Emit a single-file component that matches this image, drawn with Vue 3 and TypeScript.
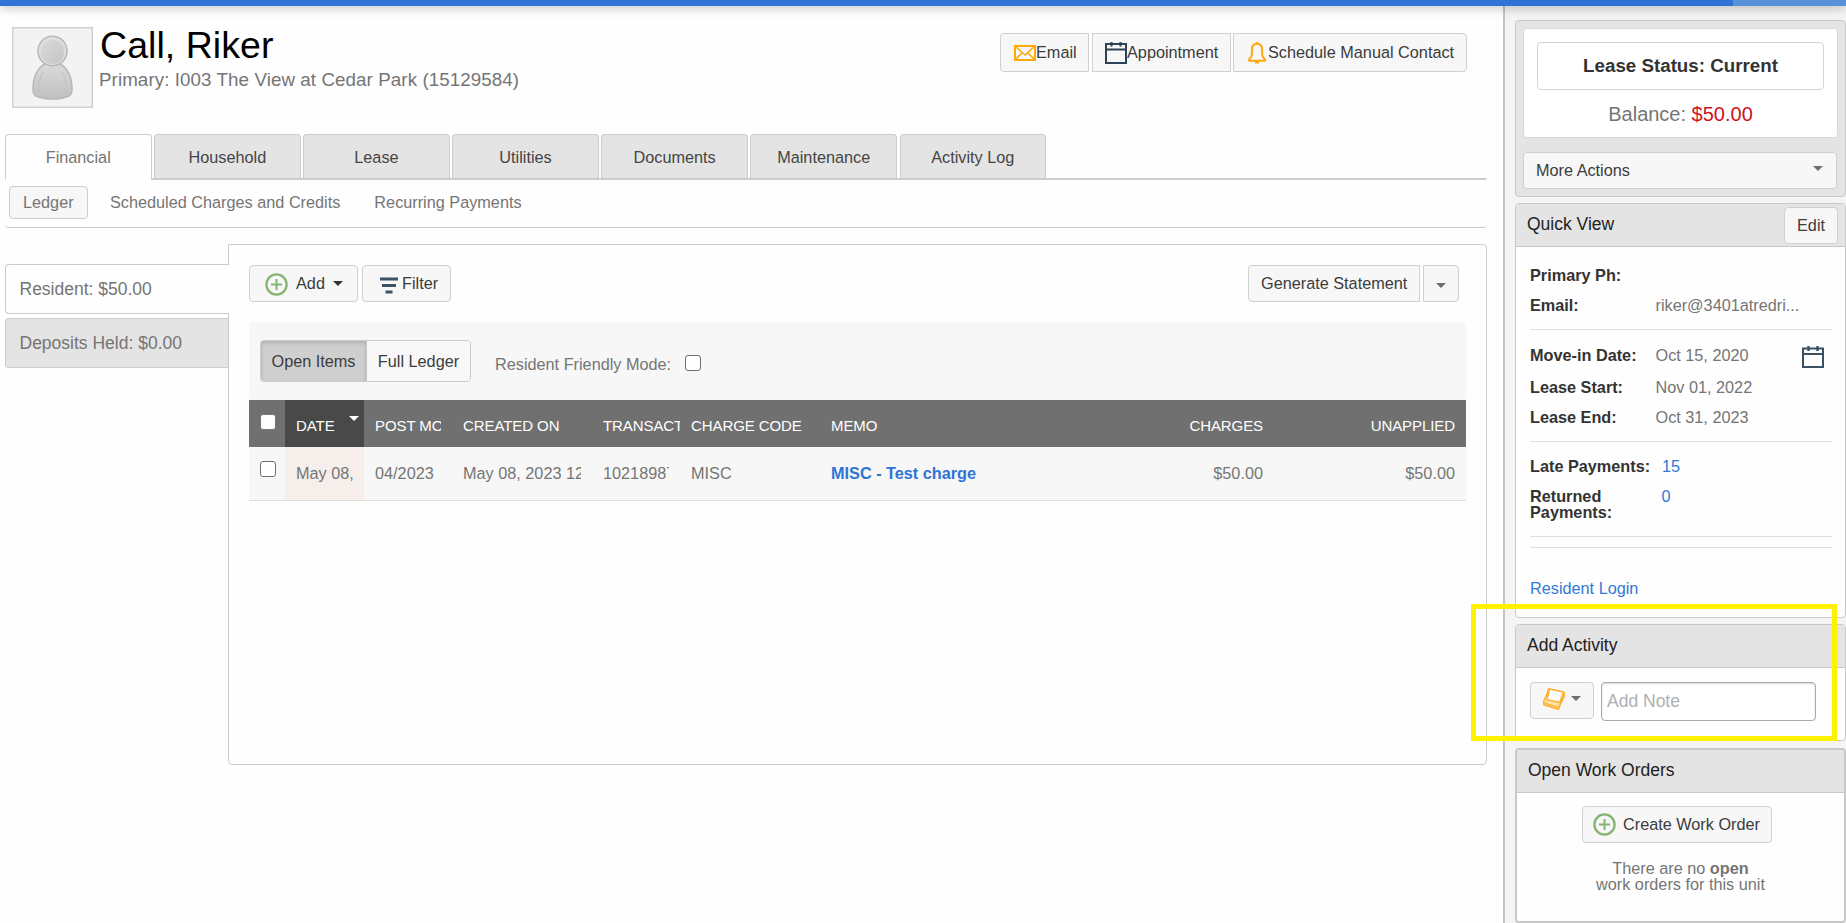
<script setup lang="ts">
import { ref } from 'vue'

interface Column {
  key: string
  label: string
  value: string
}

const tabs: string[] = ['Financial', 'Household', 'Lease', 'Utilities', 'Documents', 'Maintenance', 'Activity Log']
const subTabs: string[] = ['Ledger', 'Scheduled Charges and Credits', 'Recurring Payments']
const accounts: string[] = ['Resident: $50.00', 'Deposits Held: $0.00']
const modes: string[] = ['Open Items', 'Full Ledger']

const activeTab = ref('Financial')
const activeSubTab = ref('Ledger')
const activeAccount = ref(accounts[0])
const activeMode = ref('Open Items')
const residentFriendly = ref(false)
const allSelected = ref(false)
const rowSelected = ref(false)
const note = ref('')

const columns: Column[] = [
  { key: 'date', label: 'DATE', value: 'May 08,' },
  { key: 'post', label: 'POST MO', value: '04/2023' },
  { key: 'created', label: 'CREATED ON', value: 'May 08, 2023 12' },
  { key: 'trans', label: 'TRANSACT', value: '10218987' },
  { key: 'code', label: 'CHARGE CODE', value: 'MISC' },
  { key: 'memo', label: 'MEMO', value: 'MISC - Test charge' },
  { key: 'charges', label: 'CHARGES', value: '$50.00' },
  { key: 'unapplied', label: 'UNAPPLIED', value: '$50.00' },
]
</script>

<template>
  <div class="page">
    <div class="topbar"><div class="topbar-end"></div></div>
    <div class="layout">
      <main class="main">
        <header class="profile">
          <svg class="avatar" viewBox="0 0 81 81">
            <defs>
              <linearGradient id="skin" x1="0" y1="0" x2="1" y2="1">
                <stop offset="0" stop-color="#dadada" />
                <stop offset="1" stop-color="#c4c4c5" />
              </linearGradient>
              <linearGradient id="torso" x1="0" y1="0" x2="0" y2="1">
                <stop offset="0" stop-color="#dadada" />
                <stop offset="1" stop-color="#bfc0c1" />
              </linearGradient>
            </defs>
            <rect x=".75" y=".75" width="79.5" height="79.5" fill="#f3f3f3" stroke="#d2d2d2" stroke-width="1.5" />
            <path d="M33 37C25 41 21 51 21 62q0 5 3 7q6 3 16.500 3t16.500-3q3-2 3-7C60 51 56 41 48 37z" fill="url(#torso)" stroke="#b8b9ba" stroke-width="1.600" />
            <path d="M31 45c-4 6-5 13-4 22M50 45c4 6 5 13 4 22" fill="none" stroke="#bfbfc0" stroke-width="1" />
            <ellipse cx="40.500" cy="24" rx="14.500" ry="14.800" fill="#dededf" stroke="#b8b9ba" stroke-width="1.600" />
            <ellipse cx="40.500" cy="25" rx="11.500" ry="12" fill="url(#skin)" />
          </svg>
          <div class="identity">
            <h1>Call, Riker</h1>
            <p>Primary: I003 The View at Cedar Park (15129584)</p>
          </div>
          <div class="contact">
            <button class="btn email">
              <svg width="22" height="16" viewBox="0 0 22 16" fill="none" stroke="#fca90c" stroke-width="2">
                <rect x="1" y="1" width="20" height="14" />
                <path d="M1.500 1.500 11 10 20.500 1.500M1.500 14.500 8 8M20.500 14.500 14 8" stroke-width="1.600" />
              </svg>
              Email
            </button>
            <button class="btn appointment">
              <svg width="22" height="22" viewBox="0 0 22 22" fill="none" stroke="#2b4257" stroke-width="2">
                <path d="M1 2H21V21H1zM1 7.500H21" />
                <path d="M6.500 0V4.500M15.500 0V4.500" />
              </svg>
              Appointment
            </button>
            <button class="btn schedule">
              <svg width="18" height="22" viewBox="0 0 18 22" fill="none" stroke="#fca90c" stroke-width="2">
                <path d="M9 1.800C5.300 1.800 3.900 4.500 3.900 8v4.500c0 2.200-.8 3.200-2.700 4.600v1.700h15.600v-1.700c-1.900-1.400-2.700-2.400-2.700-4.600V8C14.100 4.500 12.700 1.800 9 1.800z" />
                <path d="M9 0v2M7 20.300h4" stroke-width="2.400" />
              </svg>
              Schedule Manual Contact
            </button>
          </div>
        </header>

        <nav class="tabs">
          <a v-for="t in tabs" :key="t" class="tab" :class="{ active: t === activeTab }" @click="activeTab = t">{{ t }}</a>
          <span class="tabs-rest"></span>
        </nav>
        <nav class="subtabs">
          <a v-for="s in subTabs" :key="s" class="subtab" :class="{ active: s === activeSubTab }" @click="activeSubTab = s">{{ s }}</a>
        </nav>

        <div class="workspace">
          <aside class="accounts">
            <a v-for="a in accounts" :key="a" class="account" :class="{ active: a === activeAccount }" @click="activeAccount = a">{{ a }}</a>
          </aside>
          <section class="ledger">
            <div class="toolbar">
              <button class="btn add">
                <svg class="plus" viewBox="0 0 23 23" fill="none" stroke="#86b573">
                  <circle cx="11.500" cy="11.500" r="10.100" stroke-width="2.300" />
                  <path d="M11.500 6v11M6 11.500h11" stroke-width="2" />
                </svg>
                Add
                <i class="caret dark"></i>
              </button>
              <button class="btn filter">
                <svg width="18" height="17" viewBox="0 0 18 17" fill="none" stroke="#3d5266" stroke-width="3">
                  <path d="M0 2h18M2 8.500h14M5.500 15h7" />
                </svg>
                Filter
              </button>
              <div class="spacer"></div>
              <button class="btn generate">Generate Statement</button>
              <button class="btn generate-more"><i class="caret"></i></button>
            </div>

            <div class="options">
              <div class="toggle">
                <button v-for="m in modes" :key="m" :class="{ on: m === activeMode }" @click="activeMode = m">{{ m }}</button>
              </div>
              <label class="friendly">Resident Friendly Mode: <input v-model="residentFriendly" type="checkbox" class="check" /></label>
            </div>

            <div class="grid head">
              <div class="cell select"><input v-model="allSelected" type="checkbox" class="check" /></div>
              <div v-for="c in columns" :key="c.key" class="cell" :class="c.key">
                <span>{{ c.label }}</span><i v-if="c.key === 'date'" class="caret sort"></i>
              </div>
            </div>
            <div class="grid row">
              <div class="cell select"><input v-model="rowSelected" type="checkbox" class="check" /></div>
              <div v-for="c in columns" :key="c.key" class="cell" :class="c.key"><span>{{ c.value }}</span></div>
            </div>
          </section>
        </div>
      </main>

      <aside class="sidebar">
        <section class="card status-card">
          <div class="status">
            <div class="status-name">Lease Status: Current</div>
            <div class="balance">Balance: <span>$50.00</span></div>
          </div>
          <button class="btn more">More Actions <i class="caret"></i></button>
        </section>

        <section class="card quick">
          <header class="card-head">Quick View <button class="btn edit">Edit</button></header>
          <div class="facts">
            <div class="fact"><b>Primary Ph:</b></div>
            <div class="fact"><b>Email:</b><span>riker@3401atredri...</span></div>
          </div>
          <div class="facts dates">
            <div class="fact movein">
              <b>Move-in Date:</b><span>Oct 15, 2020</span>
              <svg width="22" height="22" viewBox="0 0 22 22" fill="none" stroke="#3a5065" stroke-width="2">
                <path d="M1 2.500H21V21H1zM1 8H21" />
                <path d="M6.500 0V5M15.500 0V5" stroke-width="2.400" />
              </svg>
            </div>
            <div class="fact"><b>Lease Start:</b><span>Nov 01, 2022</span></div>
            <div class="fact"><b>Lease End:</b><span>Oct 31, 2023</span></div>
          </div>
          <div class="facts payments">
            <div class="fact"><b>Late Payments:</b><a>15</a></div>
            <div class="fact returned"><b>Returned Payments:</b><a>0</a></div>
          </div>
          <div class="rule"></div>
          <a class="login">Resident Login</a>
        </section>

        <section class="card activity">
          <header class="card-head">Add Activity</header>
          <div class="note-row">
            <button class="btn note-kind">
              <svg width="22" height="22" viewBox="0 0 22 22" fill="none" stroke="#fdb02b" stroke-width="1.400" stroke-linejoin="round">
                <path d="M5.500 1C4.500 5 3 9 .8 12.800v4L15.500 21.300 17.500 16 21.200 8.500V4.500z" fill="#fee0a6" />
                <path d="M1 15 16 19.200 21 7M1 16.800 16 21" stroke-width="1.100" />
                <path d="M6.500 1 20.500 4C18.800 7.500 17.800 11 17 14.500L3.800 11.600C5.200 8 6 4.500 6.500 1z" fill="#fff" />
              </svg>
              <i class="caret"></i>
            </button>
            <input v-model="note" class="note" type="text" placeholder="Add Note" />
          </div>
        </section>

        <section class="card orders">
          <header class="card-head">Open Work Orders</header>
          <button class="btn create">
            <svg class="plus" viewBox="0 0 23 23" fill="none" stroke="#86b573">
              <circle cx="11.500" cy="11.500" r="10.100" stroke-width="2.300" />
              <path d="M11.500 6v11M6 11.500h11" stroke-width="2" />
            </svg>
            Create Work Order
          </button>
          <p>There are no <b>open</b><br />work orders for this unit</p>
        </section>
      </aside>
    </div>
    <div class="callout"></div>
  </div>
</template>

<style>
body {
  margin: 0;
  overflow: hidden;
  background: #fefefe;
}
</style>

<style scoped>
* {
  box-sizing: border-box;
}
.page {
  position: relative;
  height: 923px;
  overflow: hidden;
  font: 16.25px/20px 'Liberation Sans', Arial, sans-serif;
  color: #757575;
  background: #fefefe;
}
.topbar {
  position: relative;
  z-index: 2;
  display: flex;
  justify-content: flex-end;
  height: 6px;
  background: #2e74d4;
  box-shadow: 0 0 12px rgba(0, 0, 0, 0.4);
}
.topbar-end {
  width: 113px;
  background: #5890da;
}
.layout {
  display: flex;
  height: 917px;
}
.main {
  width: 1503px;
  flex: none;
}
button,
input {
  font: inherit;
}
.btn {
  display: flex;
  align-items: center;
  flex: none;
  height: 37px;
  padding: 0 13px 2px;
  border: 1px solid #d0d0d0;
  border-radius: 4px;
  background: #f7f7f7;
  color: #3c3c3c;
  line-height: 20px;
  white-space: nowrap;
}
.btn svg {
  flex: none;
}
.caret {
  width: 0;
  height: 0;
  border: 5px solid transparent;
  border-top-color: #6f6f6f;
  border-bottom: 0;
}
.caret.dark {
  border-top-color: #333;
}

/* Profile header */
.profile {
  display: flex;
  height: 128px;
}
.avatar {
  width: 81px;
  height: 81px;
  margin: 21px 6px 0 12px;
  flex: none;
}
.identity {
  flex: 1;
  padding-top: 17px;
}
h1 {
  margin: 0 0 0 1px;
  font-size: 37.5px;
  font-weight: 400;
  line-height: 44px;
  color: #000;
  letter-spacing: 0.05px;
}
.identity p {
  margin: 2px 0 0;
  font-size: 18.75px;
  line-height: 22px;
  letter-spacing: 0.085px;
}
.contact {
  display: flex;
  padding: 27px 36px 0 0;
}
.contact .btn {
  height: 39px;
  padding-bottom: 1px;
}
.contact .email {
  width: 89px;
  margin-right: 3px;
  border-radius: 4px 0 0 4px;
}
.email svg {
  margin: 2px 0 0;
}
.contact .appointment {
  width: 139px;
  margin-right: 2px;
  padding-left: 12px;
  border-radius: 0;
}
.contact .schedule {
  width: 234px;
  padding-left: 14px;
  border-radius: 0 4px 4px 0;
}
.appointment svg,
.schedule svg {
  margin-top: 2px;
}
.schedule svg {
  margin-right: 2px;
}

/* Tabs */
.tabs {
  display: flex;
  height: 46px;
  margin: 0 16px 0 5px;
}
.tab {
  position: relative;
  display: flex;
  justify-content: center;
  flex: none;
  width: 146.5px;
  margin-right: 2.6px;
  padding: 12px 0 0;
  border: 1px solid #ccc;
  border-bottom: 2px solid #ccc;
  border-radius: 4px 4px 0 0;
  background: #e4e4e4;
  color: #444;
}
.tab::after {
  content: '';
  position: absolute;
  left: 100%;
  bottom: -2px;
  width: 5px;
  height: 2px;
  background: #ccc;
}
.tab.active {
  border-bottom-color: transparent;
  background: #fefefe;
  color: #757575;
}
.tabs-rest {
  flex: 1;
  border-bottom: 2px solid #ccc;
  border-radius: 0 0 2px 0;
}
.subtabs {
  display: flex;
  height: 48px;
  margin: 0 16px 0 5px;
  padding: 6px 4px 0;
  border-bottom: 1px solid #ccc;
  border-radius: 0 0 4px 4px;
}
.subtab {
  height: 33px;
  padding: 5px 14px;
  margin-right: 7px;
  border: 1px solid transparent;
  border-radius: 4px;
}
.subtab.active {
  width: 79px;
  padding-left: 13px;
  border-color: #ccc;
  background: #f7f7f7;
}
.subtab:nth-child(3) {
  margin-left: -3px;
}

/* Ledger */
.workspace {
  display: flex;
  margin: 16px 16px 0 5px;
  height: 521px;
}
.accounts {
  width: 224px;
  margin-right: -1px;
  padding-top: 20px;
  z-index: 1;
  flex: none;
}
.account {
  display: block;
  width: 223px;
  height: 50px;
  margin-bottom: 4px;
  padding: 14px 13.5px 0;
  border: 1px solid #ccc;
  border-right: 0;
  border-radius: 4px 0 0 4px;
  background: #e4e4e4;
  font-size: 17.5px;
}
.account.active {
  width: 224px;
  background: #fefefe;
}
.ledger {
  flex: 1;
  min-width: 0;
  padding: 20px 20px 0;
  border: 1px solid #ccc;
  border-radius: 0 4px 4px 4px;
}
.toolbar {
  display: flex;
  height: 57px;
  padding-right: 7px;
}
.spacer {
  flex: 1;
}
.plus {
  width: 23px;
  height: 23px;
}
.btn.add {
  width: 109px;
  margin-right: 4px;
  padding-left: 15px;
}
.add .plus {
  margin: 3px 8px 0 0;
}
.add .caret {
  margin: 2px 0 0 8px;
}
.btn.filter {
  width: 89px;
  padding-left: 17px;
}
.filter svg {
  margin: 5px 4px 0 0;
}
.btn.generate {
  width: 172px;
  margin-right: 3px;
  padding-left: 12px;
  border-radius: 4px 0 0 4px;
}
.btn.generate-more {
  width: 36px;
  border-radius: 0 4px 4px 0;
}
.generate-more .caret {
  margin: 5px 0 0 -1px;
}
.options {
  display: flex;
  height: 78px;
  padding: 18px 11px 0;
  border-radius: 4px;
  background: #f7f7f7;
}
.toggle {
  display: flex;
  width: 211px;
  height: 42px;
  border: 1px solid #ccc;
  border-radius: 4px;
}
.toggle button {
  flex: 1;
  padding: 0 0 1px;
  border: 0;
  background: #f8f8f8;
  color: #3c3c3c;
  white-space: nowrap;
  border-radius: 0 3px 3px 0;
}
.toggle button.on {
  flex: none;
  width: 106px;
  background: #cfcfcf;
  border-radius: 3px 0 0 3px;
  border-right: 1px solid #c4c4c4;
  box-shadow: inset 0 2px 4px rgba(0, 0, 0, 0.15);
}
.friendly {
  display: flex;
  padding: 14px 0 0 24px;
}
.check {
  appearance: none;
  flex: none;
  width: 16px;
  height: 16px;
  margin: 0;
  border: 1px solid #6f6f6f;
  border-radius: 3px;
  background: #fff;
}
.friendly .check {
  margin: 1px 0 0 14px;
}
.grid {
  display: grid;
  grid-template-columns: 36px 79px 88px 140px 88px 140px 333px 121px 192px;
}
.head {
  height: 47px;
  background: #707070;
  color: #fff;
  font-size: 15px;
  letter-spacing: -0.08px;
}
.row {
  height: 54px;
  background: #f7f7f7;
  border-bottom: 1px solid #ddd;
}
.cell {
  display: flex;
  padding: 16px 11px 0;
  overflow: hidden;
  white-space: nowrap;
}
.cell span {
  flex: 1;
  min-width: 0;
  overflow: hidden;
}
.row .cell {
  padding-top: 16px;
}
.head .select,
.row .select {
  padding-top: 14px;
}
.head .date {
  padding-right: 5px;
  background: #494949;
}
.head .trans {
  padding-right: 0;
}
.head .check {
  border-color: #777;
}
.sort {
  border-top-color: #fff;
}
.row .date {
  background: #f5eeeb;
}
.row .memo {
  color: #2e74d4;
  font-weight: 700;
}
.charges,
.unapplied {
  text-align: right;
}

/* Sidebar */
.sidebar {
  flex: 1;
  padding: 14px 0 0 10px;
  border-left: 2px solid #c4c4c4;
  background: #f4f4f4;
}
.card {
  border: 1px solid #c8c8c8;
  border-radius: 4px;
  background: #fefefe;
  overflow: hidden;
}
.status-card {
  height: 177px;
  margin-bottom: 6px;
  padding: 7px;
  background: #e4e4e4;
}
.status {
  width: 315px;
  height: 110px;
  margin-bottom: 14px;
  padding: 13px;
  border: 1px solid #d8d8d8;
  border-radius: 4px;
  background: #fff;
  text-align: center;
}
.status-name {
  height: 48px;
  padding-top: 12px;
  border: 1px solid #d4d4d4;
  border-radius: 4px;
  color: #333;
  font-size: 18.75px;
  font-weight: 700;
  line-height: 22px;
}
.balance {
  margin-top: 13px;
  font-size: 20px;
  line-height: 22px;
}
.balance span {
  color: #d0111b;
}
.btn.more {
  width: 314px;
  padding-left: 12px;
  justify-content: space-between;
}
.more .caret {
  margin-top: -2px;
}
.quick {
  height: 415px;
  margin-bottom: 6px;
}
.card-head {
  display: flex;
  justify-content: space-between;
  height: 43px;
  padding: 10px 7px 0 11px;
  border-bottom: 1px solid #c8c8c8;
  background: #e4e4e4;
  color: #222;
  font-size: 17.5px;
}
.btn.edit {
  margin-top: -7px;
  width: 54px;
  padding-left: 12px;
  font-size: 16.25px;
}
.facts {
  height: 83px;
  margin: 0 13px 0 14px;
  padding-top: 18px;
  border-bottom: 1px solid #ddd;
}
.fact {
  display: flex;
  height: 30px;
}
.fact b {
  width: 125.5px;
  flex: none;
  color: #333;
}
.fact a,
.login {
  color: #3378d6;
}
.dates {
  height: 112px;
  padding-top: 15px;
}
.fact.movein {
  height: 32px;
}
.movein svg {
  margin: 1px 8px 0 auto;
}
.payments {
  height: 95px;
  padding-top: 14px;
}
.payments b {
  width: 132px;
}
.returned b {
  width: 90px;
  margin-right: 41.5px;
  padding-top: 2px;
  line-height: 16px;
}
.rule {
  height: 11px;
  margin: 0 13px 0 14px;
  border-bottom: 1px solid #ddd;
}
.login {
  display: block;
  margin: 30px 14px 0;
}
.activity {
  height: 117px;
  margin-bottom: 7px;
}
.note-row {
  display: flex;
  padding: 14px 14px 0;
}
.btn.note-kind {
  width: 64px;
  margin-right: 7px;
  padding: 0 12px;
}
.note-kind svg {
  margin-top: -4px;
}
.note-kind .caret {
  margin: -5px 0 0 6px;
}
.note {
  width: 215px;
  height: 39px;
  padding: 0 5px;
  border: 1px solid #aaa;
  border-radius: 4px;
  background: #fff;
  font-size: 17.5px;
  box-shadow: inset 0 1px 2px rgba(0, 0, 0, 0.15);
}
.note::placeholder {
  color: #b0b0b0;
  opacity: 1;
}
.orders {
  height: 175px;
  border-width: 2px;
  text-align: center;
}
.btn.create {
  width: 190px;
  margin: 13px auto 0 65px;
  padding-left: 10px;
}
.create .plus {
  margin: 2px 7px 0 0;
}
.orders p {
  margin: 17px 0 0;
  line-height: 16px;
}

/* Highlight frame over the activity card */
.callout {
  position: absolute;
  z-index: 3;
  left: 1471px;
  top: 604px;
  width: 366px;
  height: 137px;
  border: 5px solid #fff200;
}
</style>
